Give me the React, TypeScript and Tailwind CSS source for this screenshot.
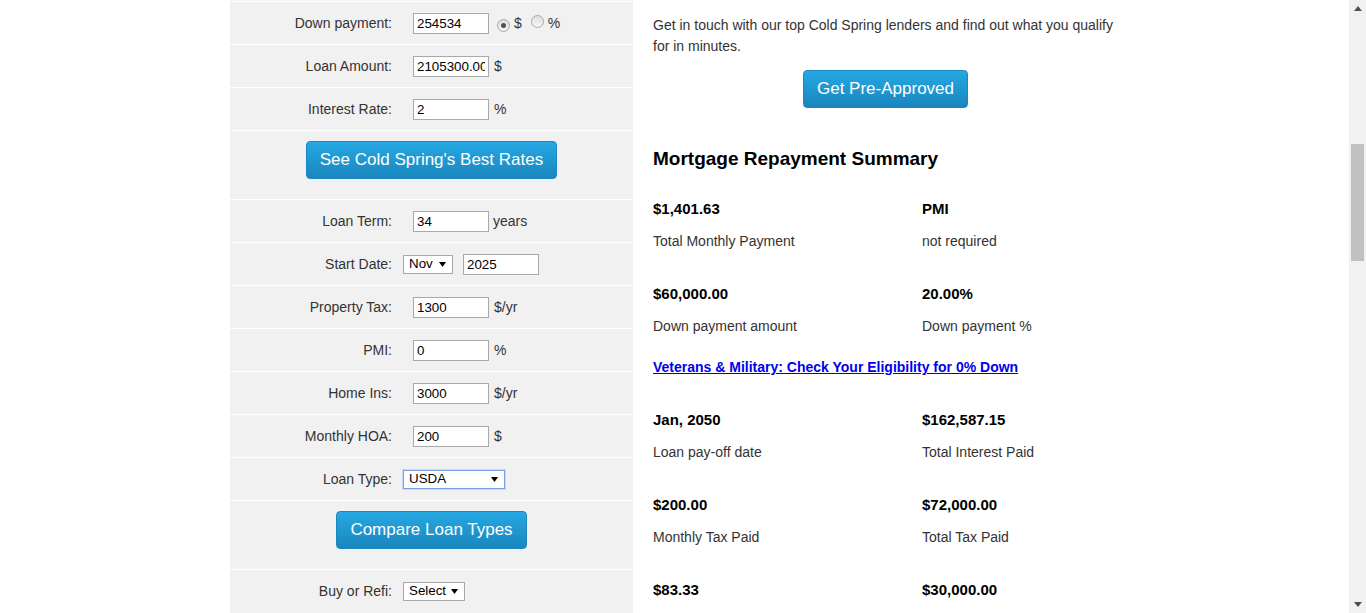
import React from "react";

function Radio({ checked }: { checked?: boolean }) {
  return (
    <span className="inline-flex w-[13px] h-[13px] rounded-full border border-[#a8a8a8] bg-gradient-to-b from-[#dedede] to-[#f7f7f7] items-center justify-center">
      {checked ? <span className="w-[5px] h-[5px] rounded-full bg-[#505050]" /> : null}
    </span>
  );
}

function Arrow() {
  return (
    <svg width="7" height="5" viewBox="0 0 7 5" className="shrink-0">
      <polygon points="0,0 7,0 3.5,5" fill="#000" />
    </svg>
  );
}

function Input({ value, className = "" }: { value: string; className?: string }) {
  return (
    <input
      readOnly
      value={value}
      className={
        "w-[76px] h-[21px] border border-[#a9a9a9] bg-white px-[3px] text-[13.33px] text-black outline-none " +
        className
      }
    />
  );
}

function Select({
  value,
  width,
  focused,
}: {
  value: string;
  width: string;
  focused?: boolean;
}) {
  return (
    <div
      className={
        "h-[19px] bg-white flex items-center justify-between pl-[5px] pr-[6px] text-[13.33px] text-black " +
        width +
        (focused ? " border border-[#7ba0e2] shadow-[0_0_0_1px_#c9daf6]" : " border border-[#a9a9a9]")
      }
    >
      <span>{value}</span>
      <Arrow />
    </div>
  );
}

function Row({ label, children }: { label: string; children: React.ReactNode }) {
  return (
    <div className="h-[43px] border-t border-white flex items-center">
      <div className="w-[162px] text-right text-[14px] text-[#333]">{label}</div>
      <div className="ml-[11px] flex items-center text-[14px] text-[#333]">{children}</div>
    </div>
  );
}

function BlueButton({ children, px }: { children: React.ReactNode; px: string }) {
  return (
    <div
      className={
        "h-[38px] inline-flex items-center justify-center rounded-[4px] border border-[#1c88c2] bg-gradient-to-b from-[#26a8e2] to-[#1a86be] text-white text-[17px] " +
        px
      }
    >
      {children}
    </div>
  );
}

function Cell({ value, label }: { value: string; label?: string }) {
  return (
    <div className="h-[50px]">
      <div className="h-[18px] leading-[18px] text-[15px] font-bold text-black">{value}</div>
      {label ? (
        <div className="mt-[14px] h-[18px] leading-[18px] text-[14px] text-[#333]">{label}</div>
      ) : null}
    </div>
  );
}

export default function App() {
  return (
    <div className="w-[1366px] h-[613px] overflow-hidden flex bg-white font-['Liberation_Sans',Arial,sans-serif]">
      <div className="w-[1349px] h-[613px] flex pl-[230px]">
        {/* Left panel */}
        <div className="w-[403px] h-[613px] bg-[#f1f1f1] pt-[1px]">
          <Row label="Down payment:">
            <Input value="254534" className="ml-[10px]" />
            <span className="ml-[8px]">
              <Radio checked />
            </span>
            <span className="ml-[4px]">$</span>
            <span className="ml-[9px]">
              <Radio />
            </span>
            <span className="ml-[4px]">%</span>
          </Row>
          <Row label="Loan Amount:">
            <Input value="2105300.00" className="ml-[10px]" />
            <span className="ml-[5px]">$</span>
          </Row>
          <Row label="Interest Rate:">
            <Input value="2" className="ml-[10px]" />
            <span className="ml-[5px]">%</span>
          </Row>
          <div className="h-[69px] border-t border-white flex justify-center pt-[10px]">
            <BlueButton px="px-[13px]">See Cold Spring's Best Rates</BlueButton>
          </div>
          <Row label="Loan Term:">
            <Input value="34" className="ml-[10px]" />
            <span className="ml-[4px]">years</span>
          </Row>
          <Row label="Start Date:">
            <Select value="Nov" width="w-[50px]" />
            <Input value="2025" className="ml-[10px] h-[20px]" />
          </Row>
          <Row label="Property Tax:">
            <Input value="1300" className="ml-[10px]" />
            <span className="ml-[5px]">$/yr</span>
          </Row>
          <Row label="PMI:">
            <Input value="0" className="ml-[10px]" />
            <span className="ml-[5px]">%</span>
          </Row>
          <Row label="Home Ins:">
            <Input value="3000" className="ml-[10px]" />
            <span className="ml-[5px]">$/yr</span>
          </Row>
          <Row label="Monthly HOA:">
            <Input value="200" className="ml-[10px]" />
            <span className="ml-[5px]">$</span>
          </Row>
          <Row label="Loan Type:">
            <div className="text-[14px]">
              <Select value="USDA" width="w-[102px]" focused />
            </div>
          </Row>
          <div className="h-[69px] border-t border-white flex justify-center pt-[10px]">
            <BlueButton px="px-[13px]">Compare Loan Types</BlueButton>
          </div>
          <Row label="Buy or Refi:">
            <Select value="Select" width="w-[62px]" />
          </Row>
        </div>

        {/* Right column */}
        <div className="w-[505px] px-[20px]">
          <p className="pt-[15px] text-[14px] leading-[21px] text-[#333]">
            Get in touch with our top Cold Spring lenders and find out what you qualify for in minutes.
          </p>
          <div className="mt-[13px] flex justify-center">
            <BlueButton px="px-[13px]">Get Pre-Approved</BlueButton>
          </div>
          <h2 className="mt-[40px] text-[19px] leading-[22px] font-bold text-black">
            Mortgage Repayment Summary
          </h2>
          <div className="mt-[30px] grid grid-cols-[269px_1fr] gap-y-[35px]">
            <Cell value="$1,401.63" label="Total Monthly Payment" />
            <Cell value="PMI" label="not required" />
            <Cell value="$60,000.00" label="Down payment amount" />
            <Cell value="20.00%" label="Down payment %" />
          </div>
          <div className="mt-[24px] h-[17px] leading-[17px] text-[14px] font-bold">
            <a href="#" className="text-[#0000ee] underline">
              Veterans &amp; Military: Check Your Eligibility for 0% Down
            </a>
          </div>
          <div className="mt-[35px] grid grid-cols-[269px_1fr] gap-y-[35px]">
            <Cell value="Jan, 2050" label="Loan pay-off date" />
            <Cell value="$162,587.15" label="Total Interest Paid" />
            <Cell value="$200.00" label="Monthly Tax Paid" />
            <Cell value="$72,000.00" label="Total Tax Paid" />
            <Cell value="$83.33" />
            <Cell value="$30,000.00" />
          </div>
        </div>
      </div>

      {/* Scrollbar */}
      <div className="w-[17px] h-[613px] bg-[#f1f1f1] flex flex-col items-center">
        <div className="h-[17px] flex items-center justify-center">
          <svg width="8" height="5" viewBox="0 0 8 5">
            <polygon points="0,5 8,5 4,0" fill="#505050" />
          </svg>
        </div>
        <div className="mt-[127px] w-[13px] h-[117px] bg-[#c1c1c1]" />
        <div className="flex-1" />
        <div className="h-[17px] flex items-center justify-center">
          <svg width="8" height="5" viewBox="0 0 8 5">
            <polygon points="0,0 8,0 4,5" fill="#505050" />
          </svg>
        </div>
      </div>
    </div>
  );
}
